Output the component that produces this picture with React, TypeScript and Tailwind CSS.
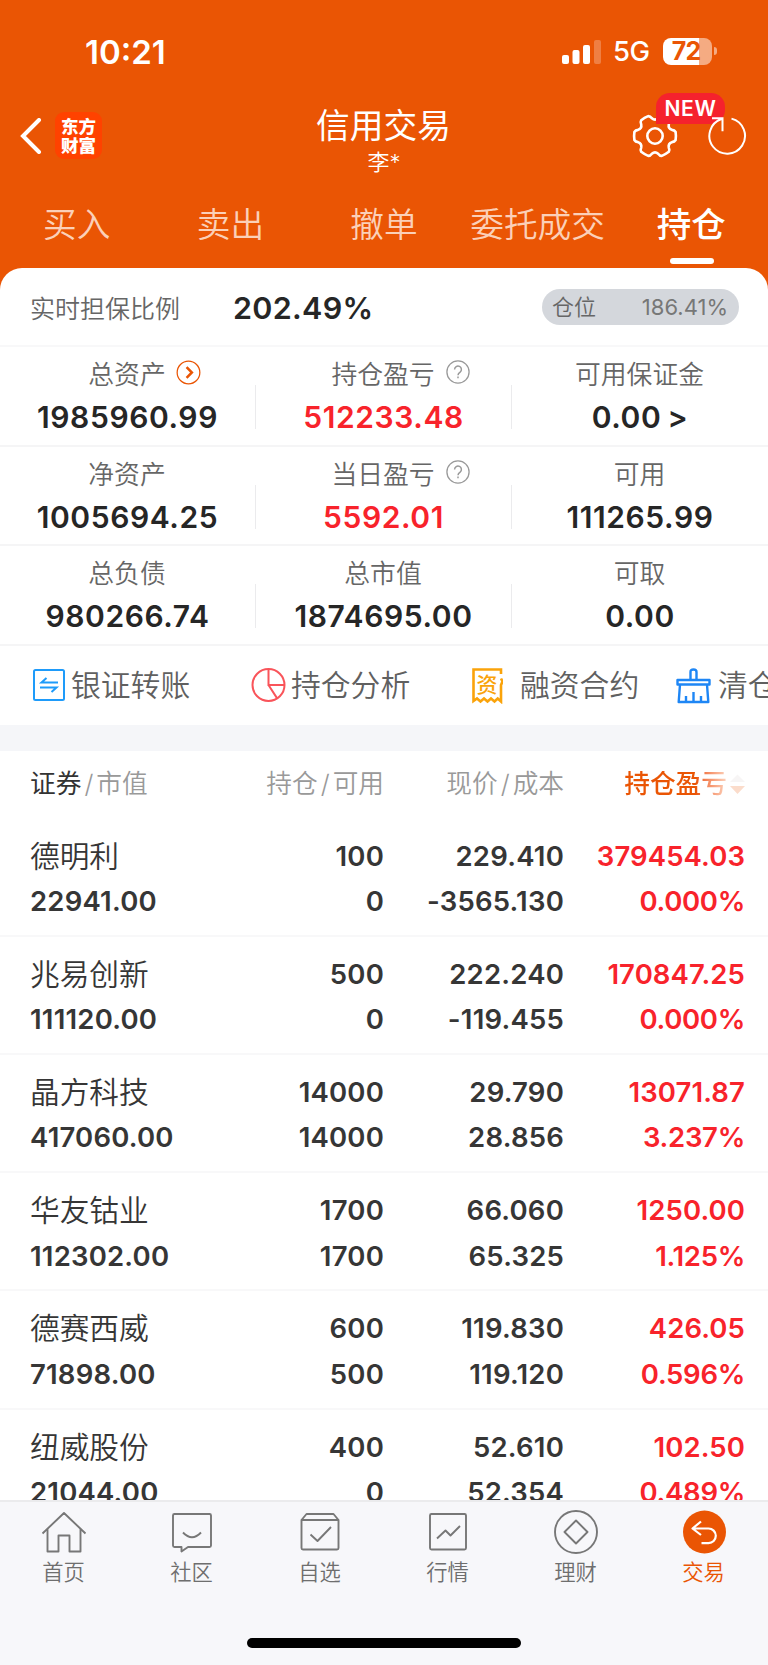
import type { ReactNode } from 'react';

const tabs = ['买入', '卖出', '撤单', '委托成交'];

type Cell = { label: string; value: string; red?: boolean; icon?: 'go' | 'help' };

const summary: Cell[][] = [
  [
    { label: '总资产', value: '1985960.99', icon: 'go' },
    { label: '持仓盈亏', value: '512233.48', red: true, icon: 'help' },
    { label: '可用保证金', value: '0.00 >' },
  ],
  [
    { label: '净资产', value: '1005694.25' },
    { label: '当日盈亏', value: '5592.01', red: true, icon: 'help' },
    { label: '可用', value: '111265.99' },
  ],
  [
    { label: '总负债', value: '980266.74' },
    { label: '总市值', value: '1874695.00' },
    { label: '可取', value: '0.00' },
  ],
];

const holdings = [
  ['德明利', '22941.00', '100', '0', '229.410', '-3565.130', '379454.03', '0.000%'],
  ['兆易创新', '111120.00', '500', '0', '222.240', '-119.455', '170847.25', '0.000%'],
  ['晶方科技', '417060.00', '14000', '14000', '29.790', '28.856', '13071.87', '3.237%'],
  ['华友钴业', '112302.00', '1700', '1700', '66.060', '65.325', '1250.00', '1.125%'],
  ['德赛西威', '71898.00', '600', '500', '119.830', '119.120', '426.05', '0.596%'],
  ['纽威股份', '21044.00', '400', '0', '52.610', '52.354', '102.50', '0.489%'],
];

function gearPath() {
  const point = (r: number, deg: number) => {
    const a = (deg * Math.PI) / 180;
    return `${(23 + r * Math.cos(a)).toFixed(2)} ${(23 + r * Math.sin(a)).toFixed(2)}`;
  };
  let d = '';
  for (let i = 0; i < 6; i++) {
    const a = i * 60;
    d += `${i ? 'L' : 'M'}${point(21, a - 11)}Q${point(21.2, a)} ${point(21, a + 11)}`;
    d += `Q${point(20.4, a + 17)} ${point(18, a + 20)}Q${point(15, a + 30)} ${point(18, a + 40)}Q${point(20.4, a + 43)} ${point(21, a + 49)}`;
  }
  return d + 'Z';
}

function StatusBar() {
  return (
    <div className="flex h-[102px] items-center justify-between pt-[2px] pr-[51px] pl-[85px]">
      <div className="text-[33px] leading-none font-semibold">10:21</div>
      <div className="flex items-center">
        <svg className="-mt-px h-6 w-[39px]" viewBox="0 0 39 24" fill="#fff">
          <rect x="0" y="15" width="7" height="9" rx="2" />
          <rect x="10.5" y="10" width="7" height="14" rx="2" />
          <rect x="21" y="5" width="7" height="19" rx="2" />
          <rect x="32" y="0" width="7" height="24" rx="2" opacity=".25" />
        </svg>
        <span className="ml-[12px] w-[37px] text-[27.500px] leading-none font-medium tracking-[-0.5px]">5G</span>
        <span className="-mt-[2px] ml-[13px] flex h-[27px] w-[49px] items-center justify-center rounded-[8px] bg-linear-to-r from-white from-73% to-[#f5ab82] to-73% text-[25px] leading-none font-bold tracking-[-1px] text-[#ea5504]">
          <span className="pr-[3px]">72</span>
        </span>
        <span className="-mt-[2px] ml-[2px] h-2 w-[3px] rounded-r-full bg-[#f5ab82]" />
      </div>
    </div>
  );
}

function TitleBar() {
  return (
    <div className="grid h-[84px] grid-cols-[1fr_200px_1fr]">
      <div className="flex items-start pt-[10px] pl-5">
        <svg className="mt-[6px] h-[36px] w-[22px]" viewBox="0 0 22 36" fill="none" stroke="#fff" strokeWidth="4">
          <path d="M19 2 3 18l16 16" strokeLinecap="round" />
        </svg>
        <div className="ml-[13px] flex h-[47px] w-[47px] flex-col items-center justify-center rounded-[9px] bg-[#ff4200] text-[17.5px] leading-[19px] font-black">
          <span>东方</span>
          <span>财富</span>
        </div>
      </div>
      <div className="flex flex-col items-center">
        <div className="mt-[6px] -ml-px text-[33.700px] leading-[36px]">信用交易</div>
        <div className="mt-[6px] text-[22px] leading-[24px] font-[350]">李*</div>
      </div>
      <div className="flex justify-end pr-[20px]">
        <div className="relative mt-[11px] h-[46px] w-[46px]">
          <svg className="h-[46px] w-[46px]" viewBox="0 0 46 46" fill="none" stroke="#fff" strokeWidth="2.6" strokeLinejoin="round">
            <path d={gearPath()} />
            <circle cx="23" cy="23" r="7.700" />
          </svg>
          <span className="absolute top-[-20px] left-[24px] flex h-[31px] w-[69px] items-center justify-center rounded-[14px] rounded-bl-none bg-[#f5222d] text-[21px] leading-none font-semibold tracking-[0.6px]">
            NEW
          </span>
        </div>
        <svg className="relative mt-[12px] ml-[28px] h-[44px] w-[42px]" viewBox="0 0 42 44" fill="none" stroke="#fff" strokeWidth="2">
          <path d="M25.500 4.600A17.800 17.800 0 1 1 15.500 5M6 4.200h10.500v13" />
        </svg>
      </div>
    </div>
  );
}

function Tabs() {
  return (
    <div className="grid h-[82px] grid-cols-5 text-center">
      {tabs.map((t) => (
        <div key={t} className="pt-[21px] text-[33.700px] leading-[36px] font-[350] whitespace-nowrap text-[#fbd0b8]">
          {t}
        </div>
      ))}
      <div className="flex flex-col items-center pt-[21px] text-[34.5px] leading-[36px] font-medium">
        <span>持仓</span>
        <span className="mt-[15px] ml-px h-[6px] w-[44px] rounded-[3px] bg-white" />
      </div>
    </div>
  );
}

function CellIcon({ kind }: { kind: 'go' | 'help' }) {
  return kind === 'go' ? (
    <svg className="ml-[10px] h-[25px] w-[25px]" viewBox="0 0 26 26" fill="none" stroke="#ea5504">
      <circle cx="13" cy="13" r="11.800" strokeWidth="1.300" />
      <path d="m11 7.500 5.500 5.500-5.500 5.500" strokeWidth="2.600" />
    </svg>
  ) : (
    <svg className="ml-[11px] h-[24px] w-[24px]" viewBox="0 0 26 26" fill="none" stroke="#999">
      <circle cx="13" cy="13" r="12" strokeWidth="1.400" />
      <path d="M9.300 10.300a3.700 3.700 0 1 1 6 2.900c-1.500 1.100-2.300 1.700-2.300 3.300M13 18v1.800" strokeWidth="1.600" />
    </svg>
  );
}

function Summary() {
  return (
    <div>
      {summary.map((row, r) => (
        <div key={r} className="grid h-[99.700px] grid-cols-3 border-b-2 border-[#f5f5f6]">
          {row.map((c, i) => (
            <div key={c.label} className="flex">
              <div className="flex flex-1 flex-col items-center">
                <div className="mt-[14px] -ml-px flex h-[28px] items-center text-[25.800px] leading-none font-[350] text-[#666]">
                  <span className={c.icon ? 'ml-[35px]' : ''}>{c.label}</span>
                  {c.icon && <span className="-mt-[6px]"><CellIcon kind={c.icon} /></span>}
                </div>
                <div className={`mt-[12px] text-[30px] leading-[32px] font-semibold tracking-[0.6px] [word-spacing:-2px] ${c.red ? 'text-[#f8232b]' : 'text-[#262626]'}`}>{c.value}</div>
              </div>
              {i < 2 && <div className="mt-[38px] h-[44px] w-px bg-[#ebebed]" />}
            </div>
          ))}
        </div>
      ))}
    </div>
  );
}

function Tool({ label, icon, className }: { label: string; icon: ReactNode; className: string }) {
  return (
    <div className={`flex shrink-0 items-center ${className}`}>
      {icon}
      <span className="text-[29.800px] leading-none font-[350] whitespace-nowrap text-[#606060]">{label}</span>
    </div>
  );
}

function Tools() {
  return (
    <div className="flex h-[79px] items-center overflow-hidden pl-[32px]">
      <Tool
        className="w-[219px] gap-[6px]"
        label="银证转账"
        icon={
          <svg className="h-[34px] w-[33px]" viewBox="0 0 33 34" fill="none" stroke="#1e9bfa" strokeWidth="2">
            <rect x="2" y="1" width="30" height="30" rx="1.500" />
            <path d="M26 13.500H9.500l5-4.500M8 18.500h16.500l-5 4.500" />
          </svg>
        }
      />
      <Tool
        className="w-[221px] gap-[5px]"
        label="持仓分析"
        icon={
          <svg className="h-[35px] w-[35px]" viewBox="0 0 35 35" fill="none" stroke="#f9545a" strokeWidth="2">
            <circle cx="17.500" cy="17" r="16" />
            <path d="M17.500 1v16h16M17.500 17l8.800 13.600" />
          </svg>
        }
      />
      <Tool
        className="w-[204px] gap-[17px]"
        label="融资合约"
        icon={
          <svg className="h-[36px] w-[31px]" viewBox="0 0 31 36" fill="none" stroke="#faa30a" strokeWidth="2.600">
            <path d="M29 6V1.500H1.500V33l3.500-2.500L8.500 33.500l3.500-3 3.500 3 3.500-3 3.500 3 3.200-3 3.300 3V17l1.500-3.500-1.500-3" />
            <text x="15" y="24" textAnchor="middle" fill="#faa30a" stroke="none" className="font-['Noto_Sans_CJK_SC'] text-[21px] font-medium">资</text>
          </svg>
        }
      />
      <Tool
        className="gap-[7px]"
        label="清仓"
        icon={
          <svg className="h-[36px] w-[35px]" viewBox="0 0 35 36" fill="none" stroke="#1e86f5" strokeWidth="2.400" strokeLinejoin="round">
            <path d="M14.500 12V4q0-2.500 3-2.500t3 2.500V12M1.500 12h32v4.500h-32zM4 16.500 2.700 34h29.600L31 16.500M10 33.500v-5.500M17.500 33.500v-9.500M25 33.500v-5.500" />
          </svg>
        }
      />
    </div>
  );
}

function Holdings() {
  const cols = 'grid grid-cols-[190px_164px_180px_181px] pl-[30px]';
  return (
    <div className="min-h-0 flex-1 overflow-hidden">
      <div className={`${cols} h-[67.500px] items-center pb-[2px] text-right text-[25.700px] leading-none font-[350] text-[#999]`}>
        <div className="text-left">
          <span className="font-normal text-[#333]">证券</span><span className="mx-[3px]">/</span>市值
        </div>
        <div>持仓<span className="mx-[3px]">/</span>可用</div>
        <div>现价<span className="mx-[3px]">/</span>成本</div>
        <div className="flex items-center justify-end font-medium">
          <span className="bg-linear-to-r from-[#ea5504] from-70% to-[#fbd3bd] bg-clip-text text-transparent">持仓盈亏</span>
          <svg className="ml-[3px] h-[22px] w-[15px]" viewBox="0 0 15 22">
            <path d="M0 9 7.500 1.500 15 9z" fill="#f7f5f5" />
            <path d="M0 13h15l-7.500 8z" fill="#fbdccb" />
          </svg>
        </div>
      </div>
      {holdings.map((h) => (
        <div key={h[0]} className={`${cols} h-[118.200px] border-b-2 border-[#f8f8f9] pt-[15px] text-right text-[27.500px] leading-[45.500px] font-semibold tracking-[0.2px] text-[#363636]`}>
          <div className="text-left">
            <div className="text-[29.700px] font-[350] tracking-normal">{h[0]}</div>
            <div>{h[1]}</div>
          </div>
          <div><div>{h[2]}</div><div>{h[3]}</div></div>
          <div><div>{h[4]}</div><div>{h[5]}</div></div>
          <div className="text-[#f8232b]"><div className="tracking-[0.1px]">{h[6]}</div><div className="tracking-[-0.3px]">{h[7]}</div></div>
        </div>
      ))}
    </div>
  );
}

const nav: { label: string; art: ReactNode; active?: boolean }[] = [
  { label: '首页', art: <path d="M1.500 23.500 23 3l21.500 20.500M6.500 19v22.500h11v-16h11v16h11V19" /> },
  { label: '社区', art: <path d="M5.500 4h35q1.500 0 1.500 1.500v30q0 1.500-1.500 1.500H19l-6.500 4.500V37h-7Q4 37 4 35.500v-30Q4 4 5.500 4zM14 22.500q9 9.500 18 0" /> },
  { label: '自选', art: <path d="M4.500 10h37v28q0 1.500-1.500 1.500H6q-1.500 0-1.500-1.500zl5-6h27l5 6M13.500 24.500l7 6.500 13.500-14" /> },
  { label: '行情', art: <><rect x="5" y="4" width="36" height="35.500" rx="1.500" /><path d="m12 28.500 8.500-8 5 5 9.500-9.500" /></> },
  { label: '理财', art: <><circle cx="23" cy="22" r="21" /><path d="m23 10.500 11.500 11.500L23 33.500 11.500 22z" /></> },
  { label: '交易', active: true, art: <><circle cx="23.500" cy="22" r="21.500" fill="#ea5504" stroke="none" /><path d="M20 11.500 11.500 18.500l8.500 6.500M12 18.500h15.500a7.300 7.300 0 0 1 0 14.600H20.500" stroke="#fff" strokeWidth="2.200" /></> },
];

function BottomNav() {
  return (
    <div className="flex h-[165px] flex-col border-t-2 border-[#ebebed] bg-[#f7f7fa]">
      <div className="grid h-[136px] grid-cols-6">
        {nav.map((n) => (
          <div key={n.label} className={`flex flex-col items-center pt-[8px] text-[21.300px] leading-[24px] ${n.active ? 'text-[#ea5504]' : 'text-[#6e6e6e]'}`}>
            <svg className="h-[46px] w-[46px]" viewBox="0 0 46 46" fill="none" stroke="#777" strokeWidth="1.900" strokeLinejoin="round">
              {n.art}
            </svg>
            <span className="mt-[4px] -ml-px font-[350]">{n.label}</span>
          </div>
        ))}
      </div>
      <div className="mx-auto h-[10px] w-[274px] rounded-full bg-black" />
    </div>
  );
}

export default function App() {
  return (
    <div className="flex h-[1665px] w-[768px] flex-col overflow-hidden bg-[#ea5504] font-['Inter','Noto_Sans_CJK_SC',sans-serif] text-white">
      <StatusBar />
      <TitleBar />
      <Tabs />
      <div className="flex min-h-0 flex-1 flex-col overflow-hidden rounded-t-[22px] bg-white">
        <div className="flex h-[79px] items-center border-b-2 border-[#f8f8f9] pt-[2px] pr-[29px] pl-[30px]">
          <span className="w-[203px] pt-[3px] text-[25px] leading-none font-[350] text-[#666]">实时担保比例</span>
          <span className="pt-[2px] text-[30.500px] leading-none font-semibold tracking-[0.3px] text-[#262626]">202.49%</span>
          <span className="mb-[2px] ml-auto flex h-[36px] w-[197px] items-center justify-between rounded-full bg-[#d4d7dc] pr-[11px] pl-[10px] text-[22px] leading-none text-[#777]">
            <span className="font-[350] text-[#666]">仓位</span>
            <span>186.41%</span>
          </span>
        </div>
        <Summary />
        <Tools />
        <div className="h-[26px] bg-[#f5f6f9]" />
        <Holdings />
      </div>
      <BottomNav />
    </div>
  );
}
